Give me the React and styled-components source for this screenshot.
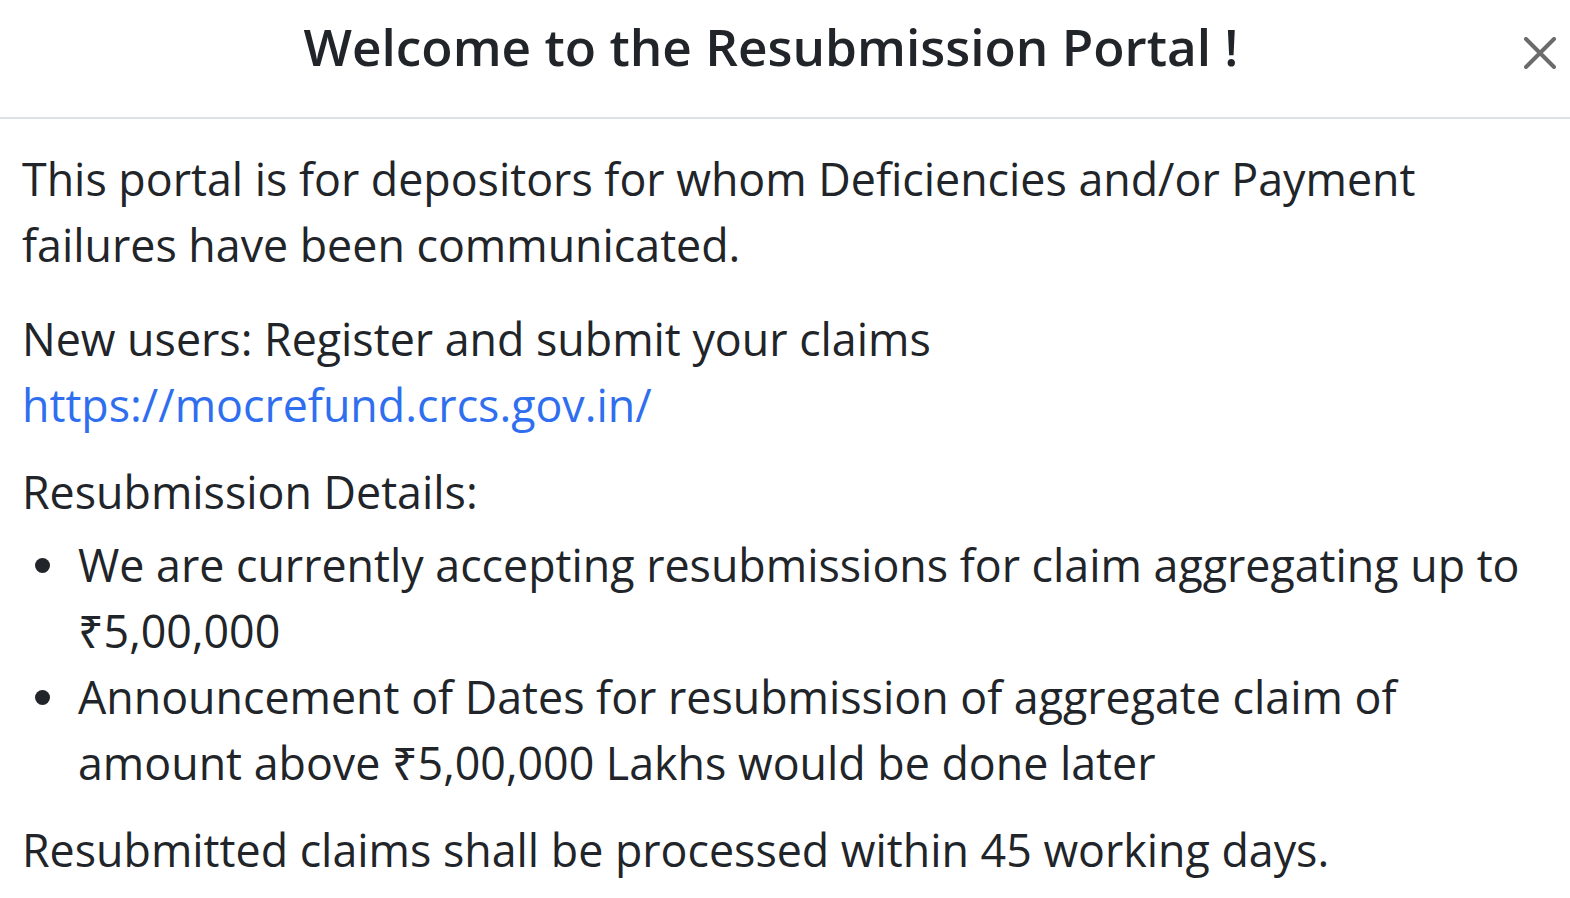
import React from "react";
import styled, { createGlobalStyle } from "styled-components";

const Global = createGlobalStyle`
  html, body { margin: 0; padding: 0; background: #fff; }
  body { font-family: "Open Sans", "Noto Sans", sans-serif; color: #212529; }
  * { box-sizing: border-box; }
`;

const Modal = styled.div`
  width: 1570px;
  background: #fff;
`;

const Header = styled.div`
  display: flex;
  align-items: center;
  padding: 15px 0 40px;
  border-bottom: 2px solid #dee2e6;
  position: relative;
`;

const Title = styled.h5`
  flex: 1;
  margin: 0;
  padding-right: 28px;
  text-align: center;
  font-size: 51.3px;
  line-height: 62px;
  font-weight: 600;
  color: #212529;
`;

const CloseButton = styled.button`
  position: absolute;
  right: 13px;
  top: 36px;
  width: 34px;
  height: 34px;
  padding: 0;
  border: 0;
  background: transparent;
  display: flex;
  align-items: center;
  justify-content: center;
  cursor: pointer;
`;

const Body = styled.div`
  padding: 27px 22px 0;
  font-size: 44.75px;
  line-height: 66px;
`;

const Para = styled.p`
  margin: ${(p) => p.$top || 0}px 0 0;
`;

const Link = styled.a`
  color: #2f6fef;
  text-decoration: none;
`;

const List = styled.ul`
  margin: 7px 0 0;
  padding-left: 56px;
  list-style: none;
`;

const Item = styled.li`
  position: relative;
  &::before {
    content: "";
    position: absolute;
    left: -43.5px;
    top: 25.5px;
    width: 15px;
    height: 15px;
    border-radius: 50%;
    background: #212529;
  }
`;

export default function App() {
  return (
    <>
      <Global />
      <Modal>
        <Header>
          <Title>Welcome to the Resubmission Portal !</Title>
          <CloseButton aria-label="Close">
            <svg width="32" height="32" viewBox="0 0 32 32">
              <path d="M2 2 L30 30 M30 2 L2 30" stroke="#6b6b6b" strokeWidth="4" strokeLinecap="round" />
            </svg>
          </CloseButton>
        </Header>
        <Body>
          <Para>
            This portal is for depositors for whom Deficiencies and/or Payment failures have been communicated.
          </Para>
          <Para $top={28}>
            New users: Register and submit your claims
            <br />
            <Link href="#">https://mocrefund.crcs.gov.in/</Link>
          </Para>
          <Para $top={21}>Resubmission Details:</Para>
          <List>
            <Item>We are currently accepting resubmissions for claim aggregating up to ₹5,00,000</Item>
            <Item>Announcement of Dates for resubmission of aggregate claim of amount above ₹5,00,000 Lakhs would be done later</Item>
          </List>
          <Para $top={21}>Resubmitted claims shall be processed within 45 working days.</Para>
        </Body>
      </Modal>
    </>
  );
}
